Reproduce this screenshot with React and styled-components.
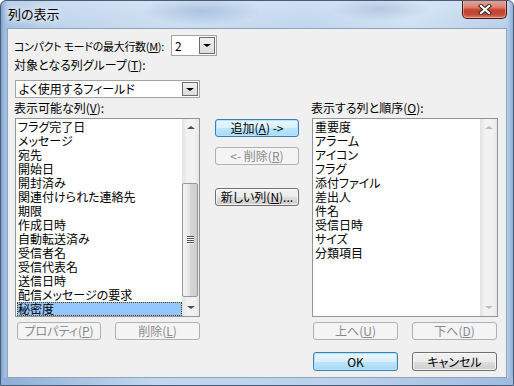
import styled, { createGlobalStyle } from 'styled-components'

const GlobalStyle = createGlobalStyle`
  html, body { margin: 0; padding: 0; }
  body {
    width: 514px;
    height: 386px;
    overflow: hidden;
    font-family: "Noto Sans CJK JP", "Noto Sans", sans-serif;
    font-size: 12px;
    font-feature-settings: "palt";
    color: #000;
  }
`;

const leftItems = [
  'フラグ完了日', 'メッセージ', '宛先', '開始日', '開封済み', '関連付けられた連絡先',
  '期限', '作成日時', '自動転送済み', '受信者名', '受信代表名', '送信日時',
  '配信メッセージの要求', '秘密度',
];

const rightItems = [
  '重要度', 'アラーム', 'アイコン', 'フラグ', '添付ファイル', '差出人', '件名',
  '受信日時', 'サイズ', '分類項目',
];

// window frame (aero glass)
const Window = styled.div`
  width: 514px;
  height: 386px;
  box-sizing: border-box;
  display: flex;
  flex-direction: column;
  border: 1px solid #4a5d78;
  border-radius: 6px 6px 0 0;
  overflow: hidden;
  background:
    linear-gradient(to right, #7d9fc9 0, #9dbbde 3px, rgba(180, 205, 235, 0) 7px),
    linear-gradient(to left, #8fb0d8 0, rgba(180, 205, 235, 0) 6px),
    radial-gradient(ellipse 60px 14px at 200px 10px, rgba(140, 170, 210, 0.55), transparent),
    radial-gradient(ellipse 50px 12px at 380px 8px, rgba(150, 175, 205, 0.5), transparent),
    linear-gradient(to bottom, rgba(255, 255, 255, 0.25), rgba(255, 255, 255, 0) 30px),
    linear-gradient(to right, #9fbde0 0%, #bcd3ec 12%, #c9dcf1 35%, #bed5ee 60%, #cde0f3 80%, #b5cde9 100%);
`;

const TitleBar = styled.div`
  height: 27px;
  display: flex;
  align-items: flex-start;
  justify-content: space-between;
`;

const Title = styled.div`
  margin: 6px 0 0 7px;
  font-size: 13px;
  line-height: 14px;
  text-shadow: 0 0 6px #fff, 0 0 8px #fff;
`;

const CloseButton = styled.div`
  width: 45px;
  height: 19px;
  margin: -1px 6px 0 0;
  box-sizing: border-box;
  border: 1px solid #4b1a14;
  border-top: none;
  border-radius: 0 0 5px 5px;
  display: flex;
  align-items: center;
  justify-content: center;
  background: linear-gradient(to bottom, #e8a597 0%, #d98372 40%, #c5432f 55%, #c24a35 80%, #d9826c 100%);
  box-shadow: inset 0 0 0 1px rgba(255, 200, 190, 0.5);
`;

const Client = styled.div`
  margin: 0 6px;
  height: 350px;
  box-sizing: border-box;
  border: 1px solid #8ea2ba;
  background: #f0f0f0;
  padding: 6px 7px 0;
  display: flex;
  flex-direction: column;
`;

const BottomFrame = styled.div`
  flex: 1;
  background: linear-gradient(to right, #8eaed6, #c3d7ee 30%, #b9d0ea 70%, #9fbbe0);
`;

const TopRow = styled.div`
  display: flex;
  align-items: center;
  height: 21px;
`;

const Label = styled.div`
  line-height: 14px;
  height: 14px;
  white-space: nowrap;
  margin-left: -1px;
  flex-shrink: 0;
  width: ${(p) => p.$width || 'auto'};
  ${(p) => p.$tight && `
    font-size: 11px;
    letter-spacing: -0.3px;
  `}
`;

const Combo = styled.div`
  width: ${(p) => p.$width};
  height: ${(p) => p.$height};
  margin-top: ${(p) => p.$mt || 0};
  box-sizing: border-box;
  border: 1px solid #a3a3a3;
  background: #fff;
  display: flex;
  align-items: center;
  justify-content: space-between;
  padding: 1px 1px 1px 3px;
  line-height: 14px;
`;

const ComboButton = styled.div`
  width: 16px;
  height: ${(p) => p.$height};
  box-sizing: border-box;
  border: 1px solid #6d6d6d;
  background: linear-gradient(to bottom, #f0f0f0, #dcdcdc);
  display: flex;
  align-items: center;
  justify-content: center;
`;

const Arrow = styled.span`
  width: 0;
  height: 0;
  border-left: ${(p) => p.$size || 4}px solid transparent;
  border-right: ${(p) => p.$size || 4}px solid transparent;
  ${(p) => (p.$up ? 'border-bottom' : 'border-top')}: ${(p) => (p.$size || 4) - 1}px solid ${(p) => p.$color || '#000'};
`;

const Columns = styled.div`
  display: grid;
  grid-template-columns: 185px 15px 84px 13px 186px;
  margin-top: ${(p) => p.$mt || 0};
  height: ${(p) => p.$height};
`;

const ListBox = styled.div`
  grid-column: ${(p) => p.$col};
  box-sizing: border-box;
  border: 1px solid #8f959c;
  background: #fff;
  display: flex;
  height: 199px;
`;

const Items = styled.div`
  flex: 1;
  padding: 1px 0 0 1px;
  overflow: hidden;
`;

const Item = styled.div`
  height: 14px;
  line-height: 14px;
  padding-left: 1px;
  white-space: nowrap;
  box-sizing: border-box;
  ${(p) => p.$selected && `
    background: #94c6ff;
    outline: 1px dotted #5a3b12;
    outline-offset: -1px;
  `}
`;

const ScrollBar = styled.div`
  width: 17px;
  display: flex;
  flex-direction: column;
  background: linear-gradient(to right, #e3e3e3, #f2f2f2 30%, #f2f2f2 70%, #e8e8e8);
`;

const ScrollArrow = styled.div`
  height: 17px;
  display: flex;
  align-items: center;
  justify-content: center;
`;

const Track = styled.div`
  flex: 1;
  padding-top: ${(p) => p.$offset}px;
`;

const Thumb = styled.div`
  height: ${(p) => p.$height}px;
  margin: 0 1px 0 0;
  box-sizing: border-box;
  border: 1px solid #979797;
  border-radius: 2px;
  background: linear-gradient(to right, #f4f4f4, #e4e4e4 50%, #d6d6d6 51%, #cfcfcf);
  display: flex;
  align-items: center;
  justify-content: center;
`;

const Grip = styled.span`
  width: 7px;
  height: 8px;
  background: repeating-linear-gradient(to bottom, #555 0 1px, #f6f6f6 1px 2px);
`;

const MiddleColumn = styled.div`
  grid-column: 3;
  display: flex;
  flex-direction: column;
  padding-top: 1px;
`;

const ButtonPair = styled.div`
  grid-column: ${(p) => p.$col};
  display: flex;
  gap: 14px;
  padding-left: ${(p) => p.$pl || 0}px;
`;

const Button = styled.div`
  width: ${(p) => p.$width || 84}px;
  height: ${(p) => p.$height || 18}px;
  margin-top: ${(p) => p.$mt || 0}px;
  box-sizing: border-box;
  border: 1px solid #707070;
  border-radius: 3px;
  display: flex;
  align-items: center;
  justify-content: center;
  white-space: nowrap;
  line-height: 14px;
  color: #000;
  background: linear-gradient(to bottom, #f2f2f2 0%, #ebebeb 50%, #dddddd 51%, #cfcfcf 100%);
  box-shadow: inset 0 0 0 1px rgba(255, 255, 255, 0.7);
  ${(p) => p.$default && `
    border-color: #3c7fb1;
    background: linear-gradient(to bottom, #eaf6fd 0%, #d9f0fc 50%, #bee6fd 51%, #a7d9f5 100%);
    box-shadow: inset 0 0 0 1px #b5e3fd;
  `}
  ${(p) => p.$disabled && `
    border-color: #adb2b5;
    background: #f4f4f4;
    box-shadow: none;
    color: #8a8a8a;
  `}
`;

function Scroll({ thumb, disabled }) {
  const c = disabled ? '#bcbcbc' : '#4d4d4d';
  return (
    <ScrollBar>
      <ScrollArrow><Arrow $up $size={4} $color={c} /></ScrollArrow>
      <Track $offset={thumb ? 47 : 0}>
        {thumb && (
          <Thumb $height={114}>
            <Grip />
          </Thumb>
        )}
      </Track>
      <ScrollArrow><Arrow $size={4} $color={c} /></ScrollArrow>
    </ScrollBar>
  );
}

export default function App() {
  return (
    <>
      <GlobalStyle />
      <Window>
        <TitleBar>
          <Title>列の表示</Title>
          <CloseButton>
            <svg width="14" height="11" viewBox="0 0 14 11">
              <path d="M3 2 L11 9 M11 2 L3 9" stroke="#3b2a28" strokeWidth="4.2" strokeLinecap="square" fill="none" />
              <path d="M3 2 L11 9 M11 2 L3 9" stroke="#fff" strokeWidth="2.2" strokeLinecap="square" fill="none" />
            </svg>
          </CloseButton>
        </TitleBar>
        <Client>
          <TopRow>
            <Label $width="157px" $tight>コンパクト モードの最大行数(<u>M</u>):</Label>
            <Combo $width="46px" $height="21px">
              <span>2</span>
              <ComboButton $height="17px"><Arrow $size={4} /></ComboButton>
            </Combo>
          </TopRow>
          <Label style={{ marginTop: 2 }}>対象となる列グループ(<u>T</u>):</Label>
          <Combo $width="185px" $height="18px" $mt="8px">
            <span>よく使用するフィールド</span>
            <ComboButton $height="14px"><Arrow $size={4} /></ComboButton>
          </Combo>

          <Columns $mt="3px" $height="14px">
            <Label style={{ gridColumn: 1 }}>表示可能な列(<u>V</u>):</Label>
            <Label style={{ gridColumn: 5 }}>表示する列と順序(<u>O</u>):</Label>
          </Columns>

          <Columns $mt="3px" $height="199px">
            <ListBox $col={1}>
              <Items>
                {leftItems.map((t, i) => (
                  <Item key={t} $selected={i === leftItems.length - 1}>{t}</Item>
                ))}
              </Items>
              <Scroll thumb />
            </ListBox>
            <MiddleColumn>
              <Button $default>追加(<u>A</u>) -&gt;</Button>
              <Button $disabled $mt={10}>&lt;- 削除(<u>R</u>)</Button>
              <Button $mt={23}>新しい列(<u>N</u>)...</Button>
            </MiddleColumn>
            <ListBox $col={5}>
              <Items>
                {rightItems.map((t) => (
                  <Item key={t}>{t}</Item>
                ))}
              </Items>
              <Scroll disabled />
            </ListBox>
          </Columns>

          <Columns $mt="5px" $height="18px">
            <ButtonPair $col={1} $pl={2}>
              <Button $disabled $width={84}>プロパティ(<u>P</u>)</Button>
              <Button $disabled $width={85}>削除(<u>L</u>)</Button>
            </ButtonPair>
            <ButtonPair $col={5} $pl={1}>
              <Button $disabled $width={85}>上へ(<u>U</u>)</Button>
              <Button $disabled $width={85}>下へ(<u>D</u>)</Button>
            </ButtonPair>
          </Columns>

          <Columns $mt="12px" $height="19px">
            <ButtonPair $col={5} $pl={1}>
              <Button $default $width={85} $height={19}>OK</Button>
              <Button $width={85} $height={19}>キャンセル</Button>
            </ButtonPair>
          </Columns>
        </Client>
        <BottomFrame />
      </Window>
    </>
  );
}
